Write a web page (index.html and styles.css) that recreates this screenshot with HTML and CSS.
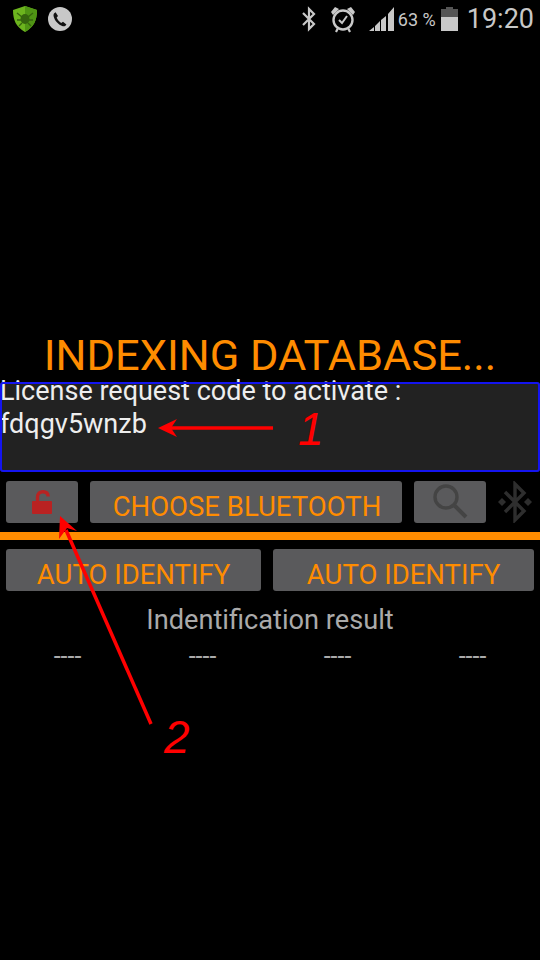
FILE: index.html
```html
<!DOCTYPE html>
<html lang="en">
  <head>
    <title>Indexing database</title>
    <link rel="stylesheet" href="styles.css">
  </head>
  <body>
    <div class="status-bar">
      <div class="status-left">
        <svg class="ic-shield" width="26" height="28" viewBox="0 0 26 28">
          <path d="M13 1 L25 5 C25 15 22 22 13 27 C4 22 1 15 1 5 Z" fill="#6cb41e"/>
          <path d="M13 1 L25 5 C25 15 22 22 13 27 Z" fill="#4f9414"/>
          <ellipse cx="13" cy="14" rx="4.5" ry="5" fill="#35640e"/>
          <path d="M5 8 L10 12 M21 8 L16 12 M5 15 L9 15 M21 15 L17 15 M7 21 L10 18 M19 21 L16 18" stroke="#35640e" stroke-width="1.4" fill="none"/>
        </svg>
        <svg class="ic-phone" width="24" height="24" viewBox="0 0 24 24">
          <circle cx="12" cy="12" r="12" fill="#c8c8c8"/>
          <path d="M7.6 5.2 L10 8.9 L8.7 10.4 C9.4 12.4 11 14.6 13.2 15.9 L15 14.7 L18.4 17.4 C17.6 18.9 16.2 19.6 14.8 19.2 C10.2 17.8 6.6 13.4 5.6 9.2 C5.2 7.4 6 5.9 7.6 5.2 Z" fill="#111"/>
        </svg>
      </div>
      <div class="status-right">
        <svg width="16" height="26" viewBox="0 0 16 26" class="ic-bt">
          <path d="M2 7 L13 18 L8 23 L8 3 L13 8 L2 19" fill="none" stroke="#c8c8c8" stroke-width="2.2"/>
        </svg>
        <svg width="26" height="28" viewBox="0 0 26 28" class="ic-alarm">
          <circle cx="13" cy="15" r="9.5" fill="none" stroke="#c8c8c8" stroke-width="2.4"/>
          <path d="M9 15 L12 18 L17 11" fill="none" stroke="#c8c8c8" stroke-width="2"/>
          <path d="M1 7 L5 2 L9 4 L3 10 Z M25 7 L21 2 L17 4 L23 10 Z" fill="#c8c8c8"/>
          <path d="M6 27 L8 23 M20 27 L18 23" stroke="#c8c8c8" stroke-width="2.2"/>
        </svg>
        <svg width="26" height="26" viewBox="0 0 26 26" class="ic-signal">
          <path d="M0 25 L5 25 L5 21 Z M6 25 L11 25 L11 15 L6 20 Z M12 25 L17 25 L17 10 L12 14 Z M19 25 L25 25 L25 1 L19 8 Z" fill="#c8c8c8"/>
        </svg>
        <span class="battery-text">63 %</span>
        <div class="battery">
          <div class="battery-cap"></div>
          <div class="battery-empty"></div>
          <div class="battery-full"></div>
        </div>
        <span class="clock">19:20</span>
      </div>
    </div>

    <h1 class="title">INDEXING DATABASE...</h1>

    <div class="license-box">
      <div class="license-text">License request code to activate :</div>
      <div class="license-text">fdqgv5wnzb</div>
    </div>

    <div class="row row-top">
      <button class="btn btn-icon">
        <svg width="20" height="24" viewBox="0 0 20 24">
          <path d="M5.5 12 V7 C5.5 3.5 8 1.7 11 1.7 C14 1.7 16 3.5 16.2 6.5" fill="none" stroke="#b92222" stroke-width="3.4"/>
          <rect x="0" y="11" width="20" height="13" rx="1" fill="#b92222"/>
        </svg>
      </button>
      <button class="btn btn-wide">CHOOSE BLUETOOTH</button>
      <button class="btn btn-icon">
        <svg width="36" height="38" viewBox="0 0 36 38">
          <circle cx="14" cy="14" r="11" fill="none" stroke="#444" stroke-width="3.4"/>
          <path d="M22 22 L34 34" stroke="#444" stroke-width="4"/>
        </svg>
      </button>
      <svg class="bt-dim" width="36" height="42" viewBox="0 0 36 42">
        <path d="M8 11 L27 30 L18 39 L18 3 L27 12 L8 31" fill="none" stroke="#2e2e2e" stroke-width="3.4"/>
        <path d="M5 17 L9 21 L5 25 L1 21 Z M31 17 L35 21 L31 25 L27 21 Z" fill="#2e2e2e"/>
      </svg>
    </div>

    <div class="divider"></div>

    <div class="row row-auto">
      <button class="btn btn-half">AUTO IDENTIFY</button>
      <button class="btn btn-half">AUTO IDENTIFY</button>
    </div>

    <div class="result-label">Indentification result</div>

    <div class="result-row">
      <span>----</span>
      <span>----</span>
      <span>----</span>
      <span>----</span>
    </div>

    <!-- red arrows and numbers drawn on top of the screenshot -->
    <svg class="notes" width="540" height="960" viewBox="0 0 540 960">
      <path d="M273 428 L170 428" stroke="#f00" stroke-width="3.5"/>
      <path d="M158 428 L177 419 L171 428 L177 437 Z" fill="#f00"/>
      <path d="M151 724 L66 530" stroke="#f00" stroke-width="3.5"/>
      <path d="M60 516 L77 531 L67 528 L59 539 Z" fill="#f00"/>
      <text x="298" y="445" class="note-num">1</text>
      <text x="164" y="753" class="note-num">2</text>
    </svg>
  </body>
</html>
```

FILE: styles.css
```css
* {
  box-sizing: border-box;
}

body {
  margin: 0;
  width: 540px;
  height: 960px;
  background: #000;
  font-family: Roboto, sans-serif;
  position: relative;
  overflow: hidden;
}

.status-bar {
  height: 38px;
  display: flex;
  justify-content: space-between;
  align-items: center;
}

.status-left {
  display: flex;
  align-items: center;
  gap: 10px;
  padding-left: 12px;
}

.status-right {
  display: flex;
  align-items: center;
  padding-right: 6px;
  color: #c8c8c8;
}

.ic-bt {
  margin-right: 13px;
}

.ic-alarm {
  margin-right: 13px;
}

.battery-text {
  font-size: 18px;
  margin-left: 3px;
  margin-right: 5px;
}

.battery {
  width: 17px;
  display: flex;
  flex-direction: column;
  align-items: center;
  margin-right: 9px;
}

.battery-cap {
  width: 7px;
  height: 2px;
  background: #555;
}

.battery-empty {
  width: 17px;
  height: 8px;
  background: #555;
}

.battery-full {
  width: 17px;
  height: 14px;
  background: #c8c8c8;
}

.clock {
  font-size: 27px;
}

.title {
  margin: 296px 0 4px;
  font-size: 43.4px;
  line-height: 44px;
  font-weight: 400;
  color: #ff8c00;
  text-align: center;
}

.license-box {
  height: 90px;
  background: #222;
  border-radius: 3px;
  color: #eee;
  font-size: 27px;
  line-height: 27px;
  margin-bottom: 9px;
  position: relative;
  display: flow-root;
}

/* the border sits over the first line of text */
.license-box::after {
  content: "";
  position: absolute;
  inset: 0;
  border: 2px solid #1414f0;
  border-radius: 3px;
}

.license-text {
  margin-top: 6px;
}

.license-text:first-child {
  margin-top: -4px;
}

.row {
  display: flex;
  padding: 0 6px;
  gap: 12px;
}

.btn {
  height: 42px;
  border: none;
  border-radius: 3px;
  background: #5a5a5c;
  color: #ff8c00;
  font-family: Roboto, sans-serif;
  font-size: 27.5px;
  padding: 0;
  display: flex;
  align-items: center;
  justify-content: center;
}

.btn-icon {
  width: 72px;
}

.btn-wide {
  width: 312px;
  padding: 8px 0 0 2px;
}

.bt-dim {
  margin-left: -1px;
}

.divider {
  height: 8px;
  margin-top: 9px;
  background: #ff8c00;
}

.row-auto {
  margin-top: 9px;
}

.btn-half {
  width: 255px;
  padding-top: 8px;
}

.btn-half:last-child {
  width: 261px;
}

.result-label {
  margin-top: 14px;
  text-align: center;
  color: #aaa;
  font-size: 27.2px;
  line-height: 30px;
}

.result-row {
  display: grid;
  grid-template-columns: repeat(4, 135px);
  margin-top: 10px;
  color: #aaa;
  font-size: 25px;
  line-height: 24px;
  text-align: center;
}

.notes {
  position: absolute;
  left: 0;
  top: 0;
}

.note-num {
  fill: #f00;
  font-family: "Liberation Sans", sans-serif;
  font-style: italic;
  font-size: 46px;
}
```
